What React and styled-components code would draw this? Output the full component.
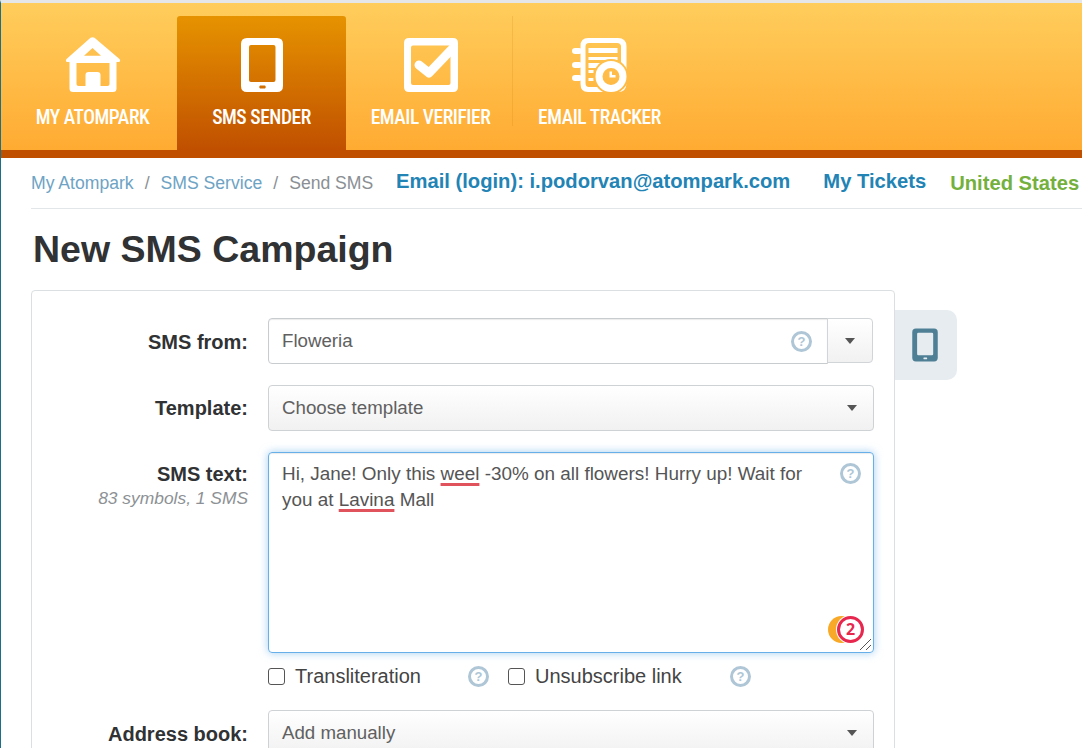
import React from 'react';
import styled, { createGlobalStyle } from 'styled-components';

const GlobalStyle = createGlobalStyle`
    html, body {
        margin: 0;
        height: 748px;
        overflow: hidden;
        background: #fff;
        font-family: "Liberation Sans", Arial, sans-serif;
    }
`;

const HomeIcon = () => (
    <svg width="56" height="56" viewBox="0 0 56 56" fill="#fff">
        <path fillRule="evenodd" d="M25.500 .8 Q27.500 -.5 29.500 .8 L54.500 22 Q56 24.500 54 25 H51.500 V51.500 Q51.500 55 48 55 H8 Q4.500 55 4.500 51.500 V25 H2 Q0 24.500 1.500 22 Z M27.500 11 L19 18.700 H36 Z M11.500 26 V47 Q11.500 49 13.500 49 H20.500 V38 Q20.500 35 23.500 35 H32.500 Q35.500 35 35.500 38 V49 H42.500 Q44.500 49 44.500 47 V26 Z" />
    </svg>
);

const PhoneIcon = ({ color = '#fff', size = 56 }) => (
    <svg width={size} height={size} viewBox="0 0 56 56" fill={color}>
        <path fillRule="evenodd" d="M13 1 H43 Q49 1 49 7 V49 Q49 55 43 55 H13 Q7 55 7 49 V7 Q7 1 13 1 Z M17 8 Q15 8 15 10 V43 Q15 45 17 45 H39.500 Q41.500 45 41.500 43 V10 Q41.500 8 39.500 8 Z M26 48.500 Q24.500 50 26 51.500 H31 Q32.500 50 31 48.500 Z" />
    </svg>
);

const CheckIcon = () => (
    <svg width="56" height="56" viewBox="0 0 56 56" fill="#fff">
        <path fillRule="evenodd" d="M6 1 H50 Q55 1 55 6 V50 Q55 55 50 55 H6 Q1 55 1 50 V6 Q1 1 6 1 Z M10 8.500 Q8 8.500 8 10.500 V46 Q8 48 10 48 H45.500 Q47.500 48 47.500 46 V10.500 Q47.500 8.500 45.500 8.500 Z" />
        <path d="M16 28 L26 36 L48 13" fill="none" stroke="#fff" strokeWidth="9" strokeLinecap="round" strokeLinejoin="round" />
    </svg>
);

const TrackerIcon = () => (
    <svg width="56" height="56" viewBox="0 0 56 56" fill="#fff">
        <defs>
            <mask id="tracker-bite">
                <rect width="56" height="56" fill="#fff" />
                <circle cx="39" cy="39.500" r="17.500" fill="#000" />
            </mask>
        </defs>
        <g mask="url(#tracker-bite)">
            <path fillRule="evenodd" d="M16 1 H46 Q54.500 1 54.500 9.500 V46 Q54.500 55 46 55 H16 Q8.500 55 8.500 47 V9 Q8.500 1 16 1 Z M17 6 Q13.500 6 13.500 9.500 V46 Q13.500 50 17 50 H45 Q49 50 49 46 V9.500 Q49 6 45 6 Z" />
            <rect x="16.500" y="11" width="29" height="5" />
            <rect x="16.500" y="20" width="29" height="3" />
            <rect x="16.500" y="26" width="20" height="5" />
            <rect x="16.500" y="33" width="5" height="3" />
            <rect x="16.500" y="41" width="5" height="3" />
        </g>
        <rect x="0" y="11" width="10" height="6" rx="3" />
        <rect x="0" y="25" width="10" height="6" rx="3" />
        <rect x="0" y="38" width="10" height="6" rx="3" />
        <path fillRule="evenodd" d="M39 24 A15.500 15.500 0 1 1 39 55 A15.500 15.500 0 1 1 39 24 Z M39 31 A8.500 8.500 0 1 0 39 48 A8.500 8.500 0 1 0 39 31 Z M37.500 34.500 H40 V38 H43.500 V40.500 H37.500 Z" />
    </svg>
);

const tabs = [
    { label: 'MY ATOMPARK', icon: <HomeIcon /> },
    { label: 'SMS SENDER', icon: <PhoneIcon />, active: true },
    { label: 'EMAIL VERIFIER', icon: <CheckIcon />, divided: true },
    { label: 'EMAIL TRACKER', icon: <TrackerIcon /> },
];

const App = () => {
    return (
        <Page>
            <GlobalStyle />
            <Nav>
                {tabs.map((tab) => (
                    <Tab key={tab.label} $active={tab.active} $divided={tab.divided}>
                        <IconSlot>{tab.icon}</IconSlot>
                        <TabLabel>{tab.label}</TabLabel>
                    </Tab>
                ))}
            </Nav>
            <Main>
                <TopBar>
                    <Crumbs>
                        <Crumb>My Atompark</Crumb>
                        <Slash>/</Slash>
                        <Crumb>SMS Service</Crumb>
                        <Slash>/</Slash>
                        <Current>Send SMS</Current>
                    </Crumbs>
                    <BlueLink>Email (login): i.podorvan@atompark.com</BlueLink>
                    <BlueLink $gap={33}>My Tickets</BlueLink>
                    <GreenLink>United States</GreenLink>
                </TopBar>
                <Title>New SMS Campaign</Title>
                <FormArea>
                    <Card>
                        <Row>
                            <Label $top={13}>SMS from:</Label>
                            <Field>
                                <InputGroup>
                                    <TextInput>
                                        <span>Floweria</span>
                                        <Help />
                                    </TextInput>
                                    <CaretButton><Caret /></CaretButton>
                                </InputGroup>
                            </Field>
                        </Row>
                        <Row>
                            <Label $top={12}>Template:</Label>
                            <Field>
                                <Select>
                                    <span>Choose template</span>
                                    <Caret />
                                </Select>
                            </Field>
                        </Row>
                        <Row>
                            <Label $top={11}>
                                SMS text:
                                <Counter>83 symbols, 1 SMS</Counter>
                            </Label>
                            <Field>
                                <TextArea>
                                    <MessageText>
                                        Hi, Jane! Only this <Misspelled>weel</Misspelled> -30% on all flowers! Hurry up! Wait for you at <Misspelled>Lavina</Misspelled> Mall
                                    </MessageText>
                                    <CornerHelp><Help /></CornerHelp>
                                    <Badge>
                                        <Crescent />
                                        <BadgeCount>2</BadgeCount>
                                    </Badge>
                                    <ResizeGrip width="13" height="13" viewBox="0 0 13 13">
                                        <path d="M1 12 L12 1 M7 12 L12 7" stroke="#555" strokeWidth="1" />
                                    </ResizeGrip>
                                </TextArea>
                                <Options>
                                    <Option $width={240}>
                                        <Box />
                                        <OptionText $width={173}>Transliteration</OptionText>
                                        <Help />
                                    </Option>
                                    <Option $width={243}>
                                        <Box />
                                        <OptionText $width={195}>Unsubscribe link</OptionText>
                                        <Help />
                                    </Option>
                                </Options>
                            </Field>
                        </Row>
                        <Row>
                            <Label $top={13}>Address book:</Label>
                            <Field>
                                <Select>
                                    <span>Add manually</span>
                                    <Caret />
                                </Select>
                            </Field>
                        </Row>
                    </Card>
                    <SideTab>
                        <PhoneIcon color="#4f7f95" size={34} />
                    </SideTab>
                </FormArea>
            </Main>
        </Page>
    );
};

export default App;

// Styled Components

const Page = styled.div`
    width: 1082px;
    height: 748px;
    overflow: hidden;
    box-sizing: border-box;
    border-top: 3px solid #e4e6e8;
    border-left: 1px solid #1b6f86;
`;

const Nav = styled.nav`
    display: flex;
    align-items: flex-end;
    height: 147px;
    padding-left: 7px;
    background: linear-gradient(#ffcd5c, #ffab32);
    border-bottom: 8px solid #c05000;
`;

const Tab = styled.div`
    position: relative;
    width: 169px;
    height: 134px;
    display: flex;
    flex-direction: column;
    align-items: center;
    border-radius: 3px 3px 0 0;
    background: ${(p) => (p.$active ? 'linear-gradient(#e69300, #c05000)' : 'transparent')};

    ${(p) => p.$divided && `
        &::after {
            content: '';
            position: absolute;
            right: 2px;
            top: 0;
            height: 110px;
            width: 1px;
            background: rgba(190, 110, 0, .15);
        }
    `}
`;

const IconSlot = styled.div`
    margin-top: 21px;
    height: 56px;
`;

const TabLabel = styled.div`
    margin-top: 14px;
    font-family: Roboto, sans-serif;
    font-weight: 500;
    font-size: 19.500px;
    font-stretch: 85%;
    letter-spacing: -.45px;
    line-height: 22px;
    color: #fff;
    white-space: nowrap;
`;

const Main = styled.main`
    padding-left: 30px;
`;

const TopBar = styled.div`
    display: flex;
    align-items: center;
    height: 51px;
    box-sizing: border-box;
    border-bottom: 1px solid #e3e6e8;
    white-space: nowrap;
    width: 1300px;
`;

const Crumbs = styled.div`
    display: flex;
    width: 365px;
    font-size: 17.600px;
    padding-top: 1px;
`;

const Crumb = styled.span`
    color: #6ea3c4;
`;

const Current = styled.span`
    color: #8a8f94;
`;

const Slash = styled.span`
    color: #8a8f94;
    margin: 0 11px;
`;

const BlueLink = styled.span`
    font-size: 20.200px;
    font-weight: 700;
    color: #2283b5;
    margin-left: ${(p) => p.$gap || 0}px;
    padding-bottom: 4px;
`;

const GreenLink = styled.span`
    font-size: 20.200px;
    font-weight: 700;
    color: #74b03d;
    margin-left: 24px;
`;

const Title = styled.h1`
    margin: 19px 0 20px 2px;
    font-size: 37.500px;
    line-height: 42px;
    font-weight: 700;
    color: #303234;
`;

const FormArea = styled.div`
    display: flex;
    align-items: flex-start;
`;

const Card = styled.div`
    width: 864px;
    box-sizing: border-box;
    border: 1px solid #dcdfe1;
    border-radius: 4px;
    padding: 27px 20px 0 0;
    display: flex;
    flex-direction: column;
    gap: 21px;
`;

const SideTab = styled.div`
    margin-top: 20px;
    width: 62px;
    height: 70px;
    box-sizing: border-box;
    padding-right: 2px;
    display: flex;
    align-items: center;
    justify-content: center;
    background: #e6ecf0;
    border-radius: 0 10px 10px 0;
`;

const Row = styled.div`
    display: flex;
    align-items: flex-start;
`;

const Label = styled.div`
    width: 236px;
    flex: none;
    padding-right: 20px;
    box-sizing: border-box;
    text-align: right;
    font-size: 20px;
    font-weight: 700;
    color: #303234;
    line-height: 22px;
    padding-top: ${(p) => p.$top}px;
`;

const Counter = styled.div`
    margin-top: 3px;
    font-size: 17.400px;
    font-weight: 400;
    font-style: italic;
    color: #8d9195;
    line-height: 20px;
`;

const Field = styled.div`
    flex: 1;
    min-width: 0;
`;

const InputGroup = styled.div`
    display: flex;
    align-items: flex-start;
    height: 46px;
    margin-right: 1px;
`;

const TextInput = styled.div`
    flex: 1;
    height: 46px;
    display: flex;
    align-items: center;
    justify-content: space-between;
    box-sizing: border-box;
    padding: 0 15px 0 13px;
    border: 1px solid #c9cccf;
    border-radius: 4px 0 0 4px;
    box-shadow: inset 0 1px 1px rgba(0, 0, 0, .08);
    font-size: 18.700px;
    color: #606060;
`;

const CaretButton = styled.div`
    width: 46px;
    height: 45px;
    margin-left: -1px;
    display: flex;
    align-items: center;
    justify-content: center;
    box-sizing: border-box;
    border: 1px solid #d2d5d8;
    border-radius: 0 4px 4px 0;
    background: linear-gradient(#fff, #f1f1f1);
`;

const Caret = styled.i`
    width: 0;
    height: 0;
    border-left: 5.500px solid transparent;
    border-right: 5.500px solid transparent;
    border-top: 6px solid #555;
`;

const Select = styled.div`
    height: 46px;
    display: flex;
    align-items: center;
    justify-content: space-between;
    box-sizing: border-box;
    padding: 0 16px 0 13px;
    border: 1px solid #cfd2d5;
    border-radius: 4px;
    background: linear-gradient(#fff, #f1f1f1);
    font-size: 18.700px;
    color: #606060;
`;

const TextArea = styled.div`
    position: relative;
    height: 201px;
    box-sizing: border-box;
    padding: 8px 13px;
    border: 1px solid #66afe9;
    border-radius: 4px;
    box-shadow: inset 0 1px 1px rgba(0, 0, 0, .08), 0 0 8px rgba(102, 175, 233, .6);
    font-size: 18.900px;
    line-height: 25.700px;
    color: #555;
`;

const CornerHelp = styled.div`
    position: absolute;
    top: 10px;
    right: 12px;
    line-height: 0;
`;

const MessageText = styled.div`
    width: 540px;
`;

const Misspelled = styled.span`
    text-decoration: underline #e0525c 2.500px;
    text-underline-offset: 3px;
    text-decoration-skip-ink: none;
`;

const Badge = styled.div`
    position: absolute;
    right: 9px;
    bottom: 8px;
    width: 36px;
    height: 28px;
`;

const Crescent = styled.div`
    position: absolute;
    left: 0;
    top: 0;
    width: 27px;
    height: 27px;
    border-radius: 50%;
    background: #f8a928;
`;

const BadgeCount = styled.div`
    position: absolute;
    right: 0;
    top: 0;
    width: 27px;
    height: 27px;
    box-sizing: border-box;
    border-radius: 50%;
    background: #fff;
    border: 3px solid #e8274f;
    box-shadow: 0 0 0 1px #fff;
    color: #e8274f;
    font-family: "Open Sans", sans-serif;
    font-weight: 700;
    font-size: 16px;
    line-height: 20px;
    text-align: center;
`;

const ResizeGrip = styled.svg`
    position: absolute;
    right: 1px;
    bottom: 1px;
`;

const Options = styled.div`
    display: flex;
    height: 36px;
    margin-top: 5px;
    margin-bottom: -5px;
`;

const Option = styled.label`
    width: ${(p) => p.$width}px;
    display: flex;
    align-items: center;
    flex: none;
    font-size: 20px;
    color: #444;
`;

const Box = styled.span`
    width: 17px;
    height: 17px;
    box-sizing: border-box;
    border: 1px solid #555;
    border-radius: 3px;
    background: #fff;
    flex: none;
`;

const OptionText = styled.span`
    width: ${(p) => p.$width}px;
    margin-left: 10px;
    flex: none;
    color: #444;
`;

const Help = () => <HelpMark>?</HelpMark>;

const HelpMark = styled.span`
    width: 21px;
    height: 21px;
    flex: none;
    box-sizing: border-box;
    display: inline-flex;
    align-items: center;
    justify-content: center;
    border: 3px solid #aec6d6;
    border-radius: 50%;
    color: #aec6d6;
    font-family: "Liberation Sans", sans-serif;
    font-weight: 700;
    font-size: 13px;
    line-height: 1;
`;
